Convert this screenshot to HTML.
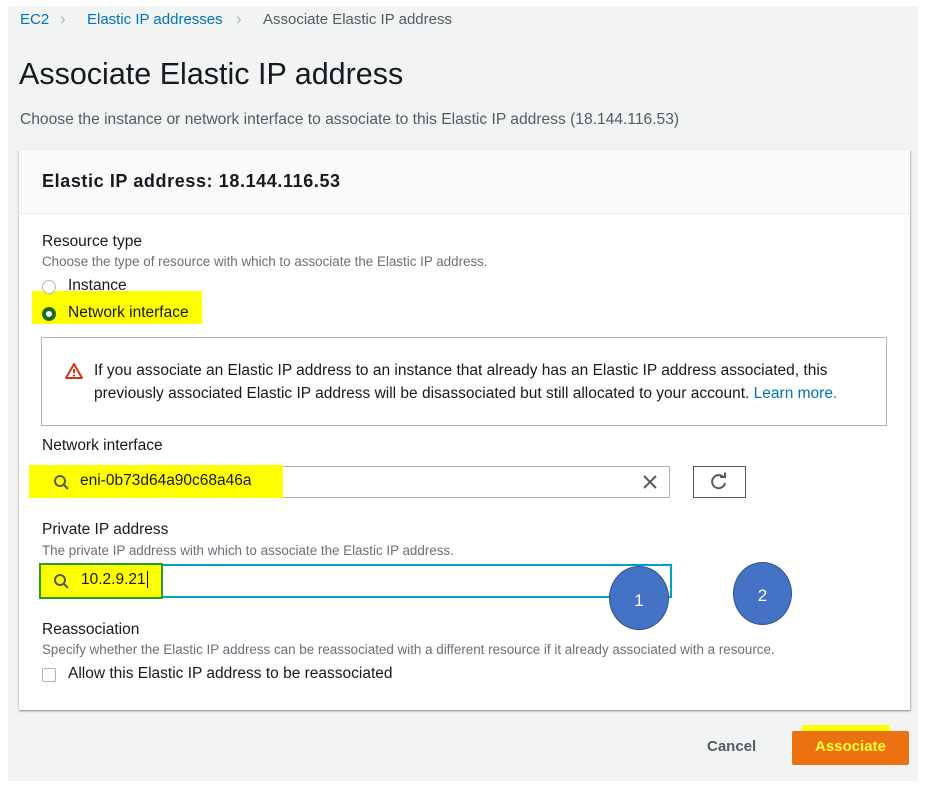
<!DOCTYPE html>
<html><head><meta charset="utf-8"><style>
*{margin:0;padding:0;box-sizing:border-box}
body{width:933px;height:788px;background:#fff;font-family:"Liberation Sans",sans-serif;position:relative;overflow:hidden;color:#16191f}
.a{position:absolute;white-space:nowrap}
#bg{left:8px;top:6px;width:910px;height:775px;background:#f2f3f3}
.hl{background:#ffff00;position:absolute}
.t{font-size:15.5px}
.s{font-size:13.4px;color:#687078}
</style></head><body>
<div class="a" id="bg"></div>
<div class="a" style="left:20px;top:11px;font-size:15px;color:#0073bb">EC2</div>
<div class="a" style="left:60px;top:9px;font-size:17px;color:#aab7b8">&#x203A;</div>
<div class="a" style="left:87px;top:11px;font-size:15px;color:#0073bb">Elastic IP addresses</div>
<div class="a" style="left:236px;top:9px;font-size:17px;color:#aab7b8">&#x203A;</div>
<div class="a" style="left:263px;top:11px;font-size:15px;color:#545b64">Associate Elastic IP address</div>
<div class="a" style="left:19px;top:57px;font-size:30.5px;color:#16191f">Associate Elastic IP address</div>
<div class="a" style="left:20px;top:111px;font-size:15.6px;color:#545b64">Choose the instance or network interface to associate to this Elastic IP address (18.144.116.53)</div>

<div class="a" style="left:19px;top:150px;width:891px;height:560px;background:#fff;box-shadow:0 1px 2px rgba(0,28,36,.4),1px 1px 1px rgba(0,28,36,.15)"></div>
<div class="a" style="left:19px;top:150px;width:891px;height:64px;background:#fafafa;border-bottom:1px solid #eaeded"></div>
<div class="a" style="left:42px;top:171px;font-size:18px;font-weight:bold;letter-spacing:0.6px">Elastic IP address: 18.144.116.53</div>

<div class="a t" style="left:42px;top:233px">Resource type</div>
<div class="a s" style="left:42px;top:254px">Choose the type of resource with which to associate the Elastic IP address.</div>
<div class="hl" style="left:32px;top:291px;width:170px;height:33px"></div>
<div class="a" style="left:42px;top:280px;width:14px;height:14px;border:1px solid #aab7b8;border-radius:50%;background:#fff"></div>
<div class="a t" style="left:68px;top:277px">Instance</div>
<div class="a" style="left:42px;top:307px;width:14px;height:14px;border:4px solid #1d6b1d;border-radius:50%;background:#fff"></div>
<div class="a t" style="left:68px;top:304px">Network interface</div>

<div class="a" style="left:41px;top:337px;width:846px;height:89px;border:1px solid #aab7b8;background:#fff"></div>
<svg class="a" style="left:64px;top:362px" width="20" height="18" viewBox="0 0 20 18"><path d="M10 2L18 16H2Z" fill="none" stroke="#d13212" stroke-width="2" stroke-linejoin="round"/><path d="M10 7v4" stroke="#d13212" stroke-width="2"/><circle cx="10" cy="13.5" r="1.1" fill="#d13212"/></svg>
<div class="a" style="left:94px;top:359px;font-size:15.5px;line-height:23px;color:#16191f">If you associate an Elastic IP address to an instance that already has an Elastic IP address associated, this<br>previously associated Elastic IP address will be disassociated but still allocated to your account. <span style="color:#0073bb">Learn more.</span></div>

<div class="a t" style="left:42px;top:437px">Network interface</div>
<div class="a" style="left:41px;top:466px;width:629px;height:32px;border:1px solid #aab7b8;background:#fff"></div>
<div class="hl" style="left:29px;top:465px;width:254px;height:33px"></div>
<svg class="a" style="left:53px;top:474px" width="17" height="17" viewBox="0 0 17 17"><circle cx="7" cy="7" r="5" fill="none" stroke="#545b64" stroke-width="2"/><path d="M10.5 10.5L15 15" stroke="#545b64" stroke-width="2"/></svg>
<div class="a t" style="left:80px;top:472px">eni-0b73d64a90c68a46a</div>
<svg class="a" style="left:641px;top:473px" width="18" height="18" viewBox="0 0 18 18"><path d="M3 3L15 15M15 3L3 15" stroke="#545b64" stroke-width="2"/></svg>
<div class="a" style="left:693px;top:466px;width:53px;height:32px;border:1px solid #545b64;background:#fff"></div>
<svg class="a" style="left:709px;top:472px" width="20" height="20" viewBox="0 0 20 20"><path d="M15 6A6.5 6.5 0 1 0 16 11" fill="none" stroke="#545b64" stroke-width="2"/><path d="M11 5H16V0.5" fill="none" stroke="#545b64" stroke-width="2"/></svg>

<div class="a t" style="left:42px;top:521px">Private IP address</div>
<div class="a s" style="left:42px;top:543px">The private IP address with which to associate the Elastic IP address.</div>
<div class="a" style="left:41px;top:564px;width:631px;height:34px;border:2px solid #00a1c9;background:#fff"></div>
<div class="hl" style="left:39px;top:563px;width:124px;height:36px;border:2px solid #2a9a2a"></div>
<svg class="a" style="left:53px;top:573px" width="17" height="17" viewBox="0 0 17 17"><circle cx="7" cy="7" r="5" fill="none" stroke="#545b64" stroke-width="2"/><path d="M10.5 10.5L15 15" stroke="#545b64" stroke-width="2"/></svg>
<div class="a t" style="left:81px;top:571px">10.2.9.21<span style="border-left:1px solid #000;margin-left:1px"></span></div>

<div class="a" style="left:609px;top:566px;width:60px;height:64px;border-radius:50%;background:#4472c4;border:1px solid #2f528f;color:#fff;font-size:17px;text-align:center;line-height:68px">1</div>
<div class="a" style="left:733px;top:562px;width:59px;height:63px;border-radius:50%;background:#4472c4;border:1px solid #2f528f;color:#fff;font-size:17px;text-align:center;line-height:66px">2</div>

<div class="a t" style="left:42px;top:621px">Reassociation</div>
<div class="a s" style="left:42px;top:642px">Specify whether the Elastic IP address can be reassociated with a different resource if it already associated with a resource.</div>
<div class="a" style="left:42px;top:668px;width:14px;height:14px;border:1px solid #aab7b8;border-radius:2px;background:#fff"></div>
<div class="a t" style="left:68px;top:665px">Allow this Elastic IP address to be reassociated</div>

<div class="a" style="left:707px;top:738px;font-size:15px;font-weight:bold;color:#545b64">Cancel</div>
<div class="a" style="left:792px;top:731px;width:117px;height:34px;background:#ec7211;border-radius:2px"></div>
<div class="a" style="left:802px;top:725px;width:88px;height:6px;background:#ffff00"></div>
<div class="a" style="left:815px;top:738px;font-size:15px;font-weight:bold;color:#ffff33">Associate</div>
</body></html>
